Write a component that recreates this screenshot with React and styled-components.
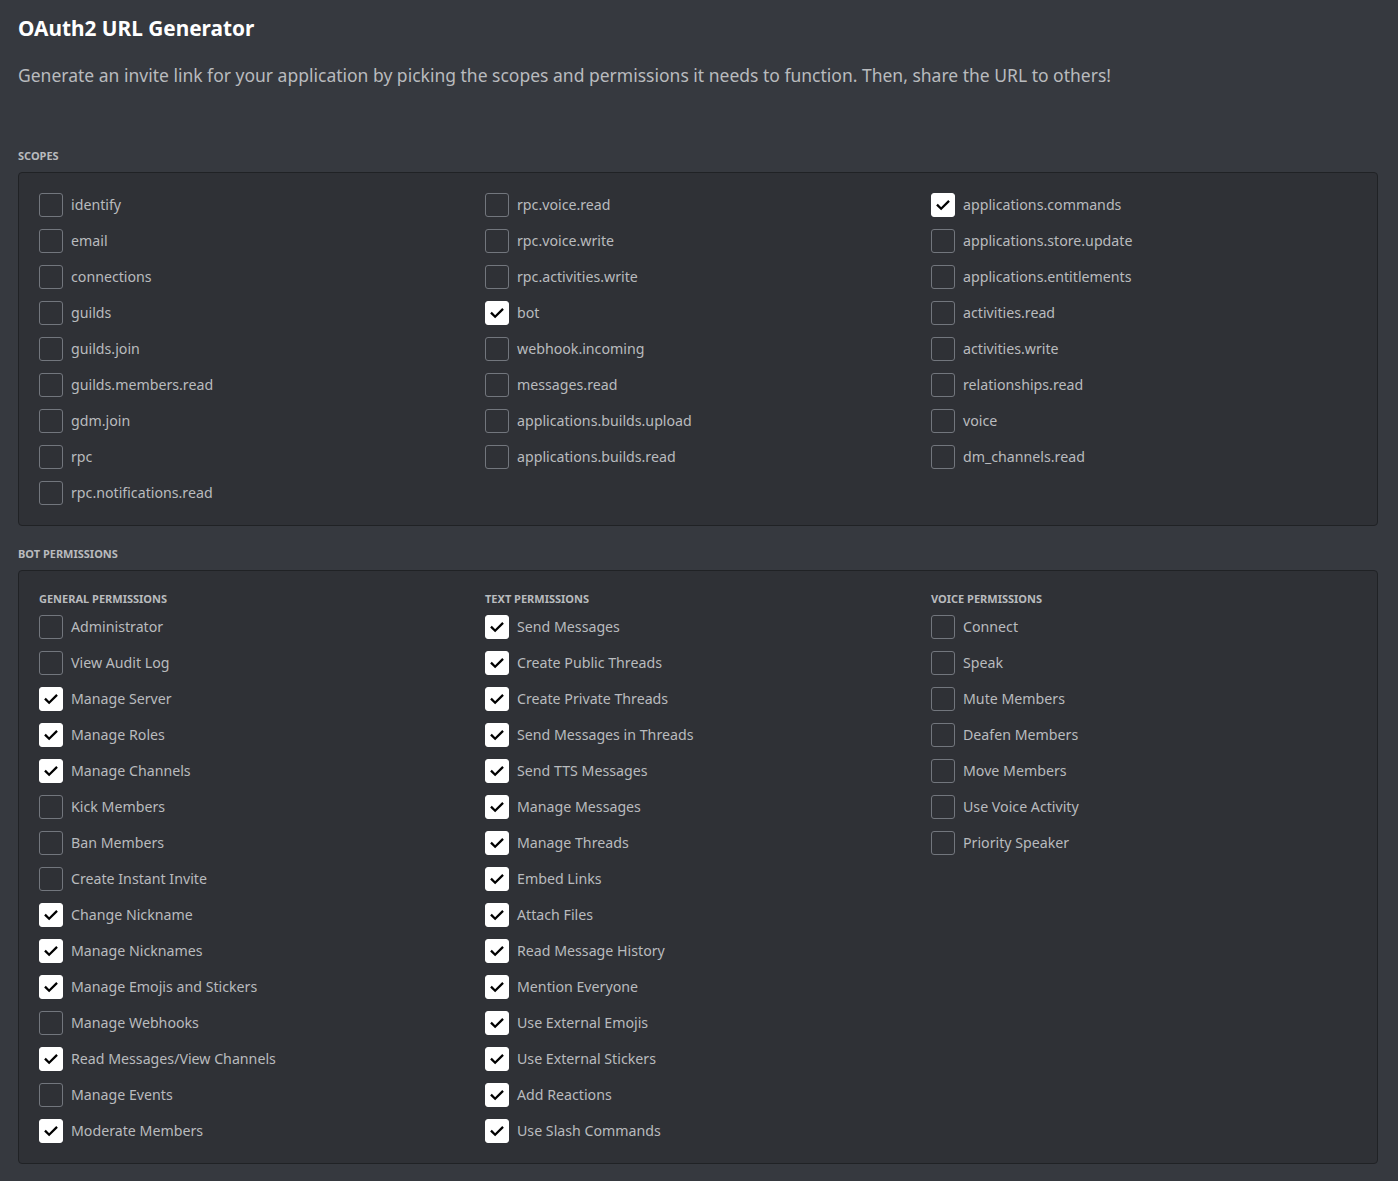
import React from "react";
import styled, { createGlobalStyle } from "styled-components";

const Global = createGlobalStyle`
  html, body { margin: 0; padding: 0; background: #36393f; }
  body { font-family: "Noto Sans", "Open Sans", sans-serif; }
`;

const Page = styled.div`
  padding: 16px 20px 18px 18px;
  background: #36393f;
  min-height: 100vh;
  box-sizing: border-box;
`;

const Title = styled.h1`
  margin: 0;
  font-size: 20.8px;
  line-height: 24px;
  font-weight: 700;
  color: #ffffff;
`;

const Subtitle = styled.p`
  margin: 25px 0 0;
  font-size: 17.5px;
  line-height: 20px;
  color: #b9bbbe;
`;

const SectionLabel = styled.h2`
  margin: ${(p) => p.$top}px 0 8px;
  font-size: 11px;
  line-height: 16px;
  font-weight: 700;
  text-transform: uppercase;
  color: #b9bbbe;
`;

const Panel = styled.div`
  background: #2f3136;
  border: 1px solid #202225;
  border-radius: 4px;
  padding: 20px 0 20px 20px;
  display: grid;
  grid-template-columns: repeat(3, 1fr);
`;

const Column = styled.div`
  display: flex;
  flex-direction: column;
  gap: 12px;
`;

const GroupTitle = styled.div`
  font-size: 11px;
  line-height: 16px;
  font-weight: 700;
  text-transform: uppercase;
  color: #b9bbbe;
  margin-bottom: -4px;
`;

const Row = styled.label`
  display: flex;
  align-items: center;
  gap: 8px;
  height: 24px;
  cursor: pointer;
`;

const Box = styled.span`
  width: 24px;
  height: 24px;
  box-sizing: border-box;
  border-radius: 3px;
  border: 1px solid ${(p) => (p.$on ? "#ffffff" : "#72767d")};
  background: ${(p) => (p.$on ? "#ffffff" : "transparent")};
  display: flex;
  align-items: center;
  justify-content: center;
  flex-shrink: 0;
`;

const Label = styled.span`
  font-size: 14.2px;
  line-height: 20px;
  color: #b9bbbe;
  white-space: nowrap;
`;

const Check = () => (
  <svg width="18" height="18" viewBox="0 0 24 24">
    <path
      fill="none"
      stroke="#000"
      strokeWidth="3"
      strokeLinecap="square"
      d="M5 12.5L9.5 17L19 7.5"
    />
  </svg>
);

const Item = ({ name, on }) => (
  <Row>
    <Box $on={on}>{on && <Check />}</Box>
    <Label>{name}</Label>
  </Row>
);

const scopes = [
  [
    ["identify"], ["email"], ["connections"], ["guilds"], ["guilds.join"],
    ["guilds.members.read"], ["gdm.join"], ["rpc"], ["rpc.notifications.read"],
  ],
  [
    ["rpc.voice.read"], ["rpc.voice.write"], ["rpc.activities.write"], ["bot", true],
    ["webhook.incoming"], ["messages.read"], ["applications.builds.upload"],
    ["applications.builds.read"],
  ],
  [
    ["applications.commands", true], ["applications.store.update"],
    ["applications.entitlements"], ["activities.read"], ["activities.write"],
    ["relationships.read"], ["voice"], ["dm_channels.read"],
  ],
];

const perms = [
  {
    title: "General Permissions",
    items: [
      ["Administrator"], ["View Audit Log"], ["Manage Server", true], ["Manage Roles", true],
      ["Manage Channels", true], ["Kick Members"], ["Ban Members"], ["Create Instant Invite"],
      ["Change Nickname", true], ["Manage Nicknames", true], ["Manage Emojis and Stickers", true],
      ["Manage Webhooks"], ["Read Messages/View Channels", true], ["Manage Events"],
      ["Moderate Members", true],
    ],
  },
  {
    title: "Text Permissions",
    items: [
      "Send Messages", "Create Public Threads", "Create Private Threads",
      "Send Messages in Threads", "Send TTS Messages", "Manage Messages", "Manage Threads",
      "Embed Links", "Attach Files", "Read Message History", "Mention Everyone",
      "Use External Emojis", "Use External Stickers", "Add Reactions", "Use Slash Commands",
    ].map((n) => [n, true]),
  },
  {
    title: "Voice Permissions",
    items: [
      ["Connect"], ["Speak"], ["Mute Members"], ["Deafen Members"], ["Move Members"],
      ["Use Voice Activity"], ["Priority Speaker"],
    ],
  },
];

export default function App() {
  return (
    <>
      <Global />
      <Page>
        <Title>OAuth2 URL Generator</Title>
        <Subtitle>
          Generate an invite link for your application by picking the scopes and permissions it
          needs to function. Then, share the URL to others!
        </Subtitle>
        <SectionLabel $top={63}>Scopes</SectionLabel>
        <Panel>
          {scopes.map((col, i) => (
            <Column key={i}>
              {col.map(([n, on]) => (
                <Item key={n} name={n} on={!!on} />
              ))}
            </Column>
          ))}
        </Panel>
        <SectionLabel $top={20}>Bot Permissions</SectionLabel>
        <Panel>
          {perms.map((g) => (
            <Column key={g.title}>
              <GroupTitle>{g.title}</GroupTitle>
              {g.items.map(([n, on]) => (
                <Item key={n} name={n} on={!!on} />
              ))}
            </Column>
          ))}
        </Panel>
      </Page>
    </>
  );
}
